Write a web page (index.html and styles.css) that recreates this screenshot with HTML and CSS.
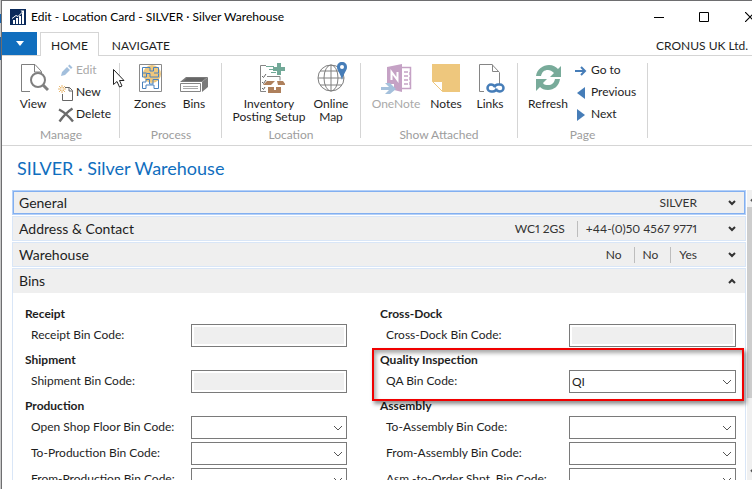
FILE: index.html
```html
<!DOCTYPE html>
<html lang="en">
<head>
<meta charset="utf-8">
<title>Edit - Location Card - SILVER · Silver Warehouse</title>
<link rel="stylesheet" href="styles.css">
</head>
<body>
<div class="window">
  <header class="titlebar">
    <svg class="app-logo" width="16" height="16" viewBox="0 0 16 16" aria-hidden="true">
      <rect width="16" height="16" fill="#0b2a5b"/>
      <path d="M3 15v-4h2v4zM6 15V9h2v6zM9 15V7h2v8zM12 15V4h2v11z" fill="#fff"/>
      <path d="M2 9.500l4-3 2 1 5-5" fill="none" stroke="#fff"/>
      <path d="M10.500 1.500H14V5z" fill="#fff"/>
    </svg>
    <h1 class="title">Edit - Location Card - SILVER · Silver Warehouse</h1>
    <div class="window-controls">
      <button type="button" aria-label="Minimize"><svg width="10" height="10" viewBox="0 0 10 10"><path d="M0 5.500h10" stroke="#000"/></svg></button>
      <button type="button" aria-label="Maximize"><svg width="10" height="10" viewBox="0 0 10 10"><path d="M.5.500h9v9h-9z" fill="none" stroke="#000"/></svg></button>
      <button type="button" aria-label="Close"><svg width="10" height="10" viewBox="0 0 10 10"><path d="M0 0l10 10M10 0L0 10" stroke="#000" stroke-width="1.200"/></svg></button>
    </div>
  </header>

  <nav class="tabs">
    <button type="button" class="app-menu" aria-label="Application menu"><svg width="8" height="5" viewBox="0 0 8 5"><path d="M0 0h8L4 5z" fill="#fff"/></svg></button>
    <a href="#home" class="tab tab-active">HOME</a>
    <a href="#navigate" class="tab">NAVIGATE</a>
    <span class="company">CRONUS UK Ltd.</span>
  </nav>

  <div class="ribbon" id="home">
    <section class="group manage">
      <div class="actions">
        <button type="button" class="large">
          <svg width="32" height="32" viewBox="0 0 32 32" aria-hidden="true">
            <path d="M13 29.500H4.500v-27H18l6.500 7V11M17.500 2.500v7.500H24" fill="none" stroke="#7f7f7f"/>
            <circle cx="21" cy="18" r="7" fill="#fff" stroke="#7f7f7f" stroke-width="2"/>
            <path d="M26 23l5 5" stroke="#7f7f7f" stroke-width="3"/>
          </svg>
          <span>View</span>
        </button>
        <div class="stack">
          <button type="button" class="small" disabled>
            <svg width="16" height="16" viewBox="0 0 16 16" aria-hidden="true"><path d="M3 13l1-4 5-5 3 3-5 5zM10 3l1.500-1.500 3 3L13 6z" fill="#a3bfdc"/></svg>
            <span>Edit</span>
          </button>
          <button type="button" class="small">
            <svg width="16" height="16" viewBox="0 0 16 16" aria-hidden="true"><path d="M7 2.500h4.500l3 3v10H4.500V9M11 2.500V6h3.500" fill="none" stroke="#666"/><path d="M4 0v8M0 4h8M1 1l6 6M7 1L1 7" stroke="#e8b872"/><circle cx="4" cy="4" r="1" fill="#fff"/></svg>
            <span>New</span>
          </button>
          <button type="button" class="small">
            <svg width="16" height="16" viewBox="0 0 16 16" aria-hidden="true"><path d="M1 2.500c5 2.500 10 7 14 12M14.500 1.500C9 5 5 9.500 1.500 14.500" fill="none" stroke="#6b6b6b" stroke-width="2.400"/></svg>
            <span>Delete</span>
          </button>
        </div>
      </div>
      <h2>Manage</h2>
    </section>

    <section class="group process">
      <div class="actions">
        <button type="button" class="large">
          <svg width="32" height="32" viewBox="0 0 32 32" aria-hidden="true">
            <path d="M5.500 2.500h22v27h-22z" fill="#fff" stroke="#8a8a8a"/>
            <circle cx="18" cy="12" r="9" fill="#eec77d"/>
            <path d="M8.500 5.500H16V9h3.500V5.500h5V11H20M8.500 5.500V15h4v-3.500H16V15h8.500v-3.500M8.500 11h4M8.500 26.500V20H12v-2.500h3.500V22H19v-4.500h5.500v9H20V23h-8v3.500z" fill="none" stroke="#4a82bd"/>
          </svg>
          <span>Zones</span>
        </button>
        <button type="button" class="large">
          <svg width="32" height="32" viewBox="0 0 32 32" aria-hidden="true">
            <path d="M8 15h22l-6 5H2z" fill="#7a7a7a"/><path d="M9 16h18l-3 3H6z" fill="#666"/>
            <path d="M30 15v10l-6 5V20z" fill="#7a7a7a"/>
            <path d="M2.500 21.500h20v8h-20z" fill="#fff" stroke="#858585"/>
            <path d="M5 24.500h15M5 26.500h15" stroke="#a8a8a8"/>
          </svg>
          <span>Bins</span>
        </button>
      </div>
      <h2>Process</h2>
    </section>

    <section class="group location">
      <div class="actions">
        <button type="button" class="large wide">
          <svg width="32" height="32" viewBox="0 0 32 32" aria-hidden="true">
            <path d="M13 3.500H7.500v26H13" fill="none" stroke="#858585"/>
            <path d="M9 14l1.500 1.500L13 12M9 20l1.500 1.500L13 18M9 26l1.500 1.500L12 25" fill="none" stroke="#666"/>
            <path d="M14 14.500h13v4" fill="none" stroke="#858585"/>
            <path d="M24 1h4v4h4v4h-4v4h-4V9h-4V5h4z" fill="#72a998"/>
            <path d="M13 4.500h8M16 7.500h4M18 10.500h5" stroke="#72a998"/>
            <path d="M14 19h8l-4 4h-8zM24 19h6l3 4h-8zM15 25h13v6H15z" fill="#ae805c"/>
            <path d="M21 25h2v3h-2z" fill="#fff"/>
          </svg>
          <span>Inventory<br>Posting Setup</span>
        </button>
        <button type="button" class="large">
          <svg width="32" height="32" viewBox="0 0 32 32" aria-hidden="true">
            <g fill="none" stroke="#808080"><circle cx="16" cy="16" r="13"/><ellipse cx="16" cy="16" rx="7" ry="13"/><path d="M16 3v26M3 16h26M5 9h22M5 23h22"/></g>
            <path d="M27 0c3 0 5 2 5 5 0 4-3 5-5 13-2-8-5-9-5-13 0-3 2-5 5-5z" fill="#467db8"/><circle cx="27" cy="5" r="2" fill="#fff"/>
          </svg>
          <span>Online<br>Map</span>
        </button>
      </div>
      <h2>Location</h2>
    </section>

    <section class="group attached">
      <div class="actions">
        <button type="button" class="large wide" disabled>
          <svg width="32" height="32" viewBox="0 0 32 32" aria-hidden="true">
            <path d="M7 5l15-3v28l-8-2v-6H7z" fill="#c5a2c5"/>
            <path d="M22 5.500h8.500v21H22M24 10h4M24 14h4M24 18h4M24 22h4M30 10v3M30 15v3M30 20v3" fill="none" stroke="#c5a2c5" stroke-width="1.500"/>
            <path d="M11.500 18v-8l6 8v-8" fill="none" stroke="#fff" stroke-width="2"/>
            <path d="M1 25h8l-4-4h5l6 6-6 5H5l4-4H1z" fill="#a5c1dc"/>
          </svg>
          <span>OneNote</span>
        </button>
        <button type="button" class="large">
          <svg width="32" height="32" viewBox="0 0 32 32" aria-hidden="true"><path d="M2 2h28v28H13L2 19z" fill="#eec77d"/><path d="M2.500 19.500h10v10z" fill="#fff" stroke="#eec77d"/></svg>
          <span>Notes</span>
        </button>
        <button type="button" class="large">
          <svg width="32" height="32" viewBox="0 0 32 32" aria-hidden="true">
            <path d="M10 29.500H5.500v-27H18l7.500 8V22M18.500 2.500v7H25" fill="none" stroke="#858585"/>
            <path d="M21 25c-1-2-2-2.500-4-2.500a3.500 3.500 0 0 0 0 7h2c2 0 3-1 3.500-3M22 27c1 2 2 2.500 4 2.500a3.500 3.500 0 0 0 0-7h-2c-2 0-3 1-3.500 3" fill="none" stroke="#467db8" stroke-width="2.500"/>
          </svg>
          <span>Links</span>
        </button>
      </div>
      <h2>Show Attached</h2>
    </section>

    <section class="group page">
      <div class="actions">
        <button type="button" class="large">
          <svg width="32" height="32" viewBox="0 0 32 32" aria-hidden="true">
            <path d="M4 14c1-7 7-11 13-11 4 0 7 2 9 4l3-3v11H18l4-4c-2-2-4-3-6-3-4 0-6 2-7 6z" fill="#78ab9a"/>
            <path d="M28 17c-1 7-6 11-12 11-4 0-6-1-8-3l-4 4V17h11l-4 4c1 2 3 2 5 2 4 0 6-2 7-6z" fill="#78ab9a"/>
          </svg>
          <span>Refresh</span>
        </button>
        <div class="stack">
          <button type="button" class="small">
            <svg width="16" height="16" viewBox="0 0 16 16" aria-hidden="true"><path d="M2 8h10M8 4l4 4-4 4" fill="none" stroke="#467db8" stroke-width="2"/></svg>
            <span>Go to</span>
          </button>
          <button type="button" class="small">
            <svg width="16" height="16" viewBox="0 0 16 16" aria-hidden="true"><path d="M12 2v12L4 8z" fill="#467db8"/></svg>
            <span>Previous</span>
          </button>
          <button type="button" class="small">
            <svg width="16" height="16" viewBox="0 0 16 16" aria-hidden="true"><path d="M4 2v12l8-6z" fill="#467db8"/></svg>
            <span>Next</span>
          </button>
        </div>
      </div>
      <h2>Page</h2>
    </section>
    <svg class="pointer" width="14" height="21" viewBox="0 0 14 21" aria-hidden="true"><path d="M1.500 1.500v15l3.500-3 2.500 5.500 2.500-1-2.500-5.500h4.500z" fill="#fff" stroke="#222"/></svg>
  </div>

  <main class="content">
    <h2 class="record">SILVER · Silver Warehouse</h2>
    <div class="scroll-area">
      <div class="fasttabs">
        <button type="button" class="fasttab selected">
          <span class="name">General</span>
          <span class="facts"><span>SILVER</span></span>
          <svg class="chevron" width="8" height="8" viewBox="0 0 8 8"><path d="M1 2l3 3 3-3" fill="none" stroke="#333" stroke-width="2"/></svg>
        </button>
        <button type="button" class="fasttab">
          <span class="name">Address &amp; Contact</span>
          <span class="facts"><span>WC1 2GS</span><span>+44-(0)50 4567 9771</span></span>
          <svg class="chevron" width="8" height="8" viewBox="0 0 8 8"><path d="M1 2l3 3 3-3" fill="none" stroke="#333" stroke-width="2"/></svg>
        </button>
        <button type="button" class="fasttab">
          <span class="name">Warehouse</span>
          <span class="facts"><span>No</span><span>No</span><span>Yes</span></span>
          <svg class="chevron" width="8" height="8" viewBox="0 0 8 8"><path d="M1 2l3 3 3-3" fill="none" stroke="#333" stroke-width="2"/></svg>
        </button>
        <div class="panel">
          <button type="button" class="fasttab open" aria-expanded="true">
            <span class="name">Bins</span>
            <span class="facts"></span>
            <svg class="chevron" width="8" height="8" viewBox="0 0 8 8"><path d="M1 6l3-3 3 3" fill="none" stroke="#333" stroke-width="2"/></svg>
          </button>
          <form class="fields">
            <div class="column">
              <section class="field-group">
                <h3>Receipt</h3>
                <div class="field"><label for="receipt">Receipt Bin Code:</label><input id="receipt" type="text" disabled></div>
              </section>
              <section class="field-group">
                <h3>Shipment</h3>
                <div class="field"><label for="shipment">Shipment Bin Code:</label><input id="shipment" type="text" disabled></div>
              </section>
              <section class="field-group">
                <h3>Production</h3>
                <div class="field"><label for="open-shop">Open Shop Floor Bin Code:</label><span class="picker"><select id="open-shop"><option></option></select><svg width="10" height="6" viewBox="0 0 10 6"><path d="M1 1l4 4 4-4" fill="none" stroke="#555"/></svg></span></div>
                <div class="field"><label for="to-production">To-Production Bin Code:</label><span class="picker"><select id="to-production"><option></option></select><svg width="10" height="6" viewBox="0 0 10 6"><path d="M1 1l4 4 4-4" fill="none" stroke="#555"/></svg></span></div>
                <div class="field"><label for="from-production">From-Production Bin Code:</label><span class="picker"><select id="from-production"><option></option></select><svg width="10" height="6" viewBox="0 0 10 6"><path d="M1 1l4 4 4-4" fill="none" stroke="#555"/></svg></span></div>
              </section>
            </div>
            <div class="column column-right">
              <section class="field-group">
                <h3>Cross-Dock</h3>
                <div class="field"><label for="cross-dock">Cross-Dock Bin Code:</label><input id="cross-dock" type="text" disabled></div>
              </section>
              <section class="field-group highlighted">
                <h3>Quality Inspection</h3>
                <div class="field"><label for="qa">QA Bin Code:</label><span class="picker"><select id="qa"><option>QI</option></select><svg width="10" height="6" viewBox="0 0 10 6"><path d="M1 1l4 4 4-4" fill="none" stroke="#555"/></svg></span></div>
              </section>
              <section class="field-group">
                <h3>Assembly</h3>
                <div class="field"><label for="to-assembly">To-Assembly Bin Code:</label><span class="picker"><select id="to-assembly"><option></option></select><svg width="10" height="6" viewBox="0 0 10 6"><path d="M1 1l4 4 4-4" fill="none" stroke="#555"/></svg></span></div>
                <div class="field"><label for="from-assembly">From-Assembly Bin Code:</label><span class="picker"><select id="from-assembly"><option></option></select><svg width="10" height="6" viewBox="0 0 10 6"><path d="M1 1l4 4 4-4" fill="none" stroke="#555"/></svg></span></div>
                <div class="field"><label for="asm-order">Asm.-to-Order Shpt. Bin Code:</label><span class="picker"><select id="asm-order"><option></option></select><svg width="10" height="6" viewBox="0 0 10 6"><path d="M1 1l4 4 4-4" fill="none" stroke="#555"/></svg></span></div>
              </section>
            </div>
          </form>
        </div>
      </div>
      <div class="scrollbar" aria-hidden="true">
        <svg width="17" height="17" viewBox="0 0 17 17"><path d="M4 11l4-4 4 4" fill="none" stroke="#505050" stroke-width="2"/></svg>
        <div class="thumb"></div>
        <svg width="17" height="17" viewBox="0 0 17 17"><path d="M4 7l4 4 4-4" fill="none" stroke="#505050" stroke-width="2"/></svg>
      </div>
    </div>
  </main>
</div>
</body>
</html>
```
FILE: styles.css
```css
* { box-sizing: border-box; }

body {
  margin: 0;
  padding-left: 1px;
  height: 100vh;
  overflow: hidden;
  background: linear-gradient(#c8c8c8 14px, #1763ad 14px 23px, #c8c8c8 23px 37px, #1763ad 37px 60px, #c8c8c8 60px);
  font: 12px/16px Lato, "Open Sans", sans-serif;
  font-variant-numeric: proportional-nums;
  color: #1e1e1e;
}

h1, h2, h3 { margin: 0; font-size: 12px; font-weight: 400; }
button { padding: 0; border: 0; background: none; font: inherit; font-variant-numeric: inherit; color: inherit; }
svg { display: block; flex: none; }

.window {
  display: flex;
  flex-direction: column;
  height: 100%;
  overflow: hidden;
  border: solid #6e6e70;
  border-width: 1px 0 0 1px;
  background: #fff;
}

.titlebar { display: flex; align-items: center; height: 31px; flex: none; padding-left: 8px; }
.title { margin-left: 5px; flex: 1; color: #000; }
.window-controls { display: flex; margin-right: -21px; }
.window-controls button { display: grid; place-items: center; width: 46px; height: 30px; }
.window-controls button:first-child { width: 44px; }

.tabs { display: flex; height: 24px; flex: none; border-bottom: 1px solid #d5d5d5; }
.app-menu { display: grid; place-items: center; width: 35px; background: #106ebe; }
.tab { padding: 5px 10px 0; text-decoration: none; color: #1e1e1e; border: 1px solid transparent; border-bottom: 0; }
.tab-active { margin: 0 2px 0 3px; height: 24px; border-color: #d5d5d5; background: #fff; }
.company { margin-left: auto; padding: 6px 4px 0 0; }

.ribbon { position: relative; display: flex; height: 90px; flex: none; border-bottom: 1px solid #d5d5d5; }
.group { display: flex; flex-direction: column; margin: 7px 0; padding: 0 7px; border-right: 1px solid #d5d5d5; }
.manage { width: 118px; padding-left: 8px; }
.process { width: 102px; padding-left: 8px; }
.location { width: 139px; }
.attached { width: 157px; }
.page { width: 130px; }
.group h2 { height: 8px; line-height: 10px; text-align: center; color: #9d9d9d; }
.actions { display: flex; flex: 1; }
.large { display: flex; flex-direction: column; align-items: center; width: 46px; height: 64px; flex: none; line-height: 13px; text-align: center; white-space: nowrap; }
.large span { margin-top: 3px; }
.process .large, .location .large, .attached .large { width: 44px; }
.location .wide { width: 80px; }
.attached .wide { width: 56px; }
.large svg { margin-top: -1px; }
.stack { display: flex; flex-direction: column; gap: 6px; margin-left: 2px; }
.small { display: flex; align-items: center; gap: 2px; height: 16px; white-space: nowrap; }
.small span { line-height: 14px; padding-bottom: 2px; }
.large:disabled, .small:disabled { color: #a9a9a9; }
.pointer { position: absolute; left: 110px; top: 12px; }

.content { display: flex; flex-direction: column; flex: 1; min-height: 0; padding: 10px 0 9px; }
.record { height: 34px; flex: none; padding-left: 15px; font-size: 18px; line-height: 25px; color: #106ebe; }
.scroll-area { display: flex; flex: 1; min-height: 0; overflow: hidden; padding-left: 10px; }
.fasttabs { display: flex; flex-direction: column; flex: 1; gap: 1px; min-width: 0; }
.fasttab { display: flex; align-items: center; width: 100%; height: 25px; flex: none; padding: 0 9px 0 6px; border: 1px solid #d9e6f7; background: #efefef; text-align: left; }
.fasttab.selected { border: 1px solid #b4d0f8; outline: 1px solid #82aff0; outline-offset: -2px; }
.fasttab.open { border-width: 1px 0 0; }
.name { flex: 1; font-size: 14px; }
.facts { display: flex; margin-right: 31px; color: #333; }
.facts span + span { margin-left: 12px; padding-left: 8px; border-left: 1px solid #bdbdbd; }
.panel { border: solid #d9e6f7; border-width: 0 1px; flex: none; }

.fields { display: grid; grid-template-columns: 322fr 356fr; gap: 33px; padding: 11px 9px 0 12px; }
.column, .field-group { display: flex; flex-direction: column; gap: 3px; }
.field-group { gap: 0; }
.field-group h3 { height: 20px; line-height: 20px; font-weight: 700; }
.field { display: grid; grid-template-columns: 160px 1fr; align-items: center; padding-left: 6px; }
.field + .field { margin-top: 3px; }
.column-right .field { grid-template-columns: 183px 1fr; }
.field label { white-space: nowrap; padding-bottom: 2px; }
.field input, .field select { display: block; width: 100%; height: 23px; margin: 0; padding: 2px; border: 1px solid #7a7a7a; border-radius: 0; background: #fff; color: #1e1e1e; font: inherit; }
.field input:disabled { background: #efefef content-box; }
.field select { appearance: none; }
.picker { position: relative; }
.picker svg { position: absolute; right: 4px; top: 9px; pointer-events: none; }

.highlighted { position: relative; }
.highlighted::after {
  content: "";
  position: absolute;
  z-index: 1;
  inset: -2px -8px -8px;
  border: 2px solid #f00000;
  box-shadow: 2px 3px 4px rgba(0, 0, 0, .45), inset 2px 3px 4px rgba(0, 0, 0, .35);
  pointer-events: none;
}

.scrollbar { display: flex; flex-direction: column; width: 5px; margin-left: 1px; flex: none; overflow: hidden; background: #f0f0f0; }
.thumb { width: 17px; height: 66%; margin-bottom: auto; background: #cdcdcd; }
```
